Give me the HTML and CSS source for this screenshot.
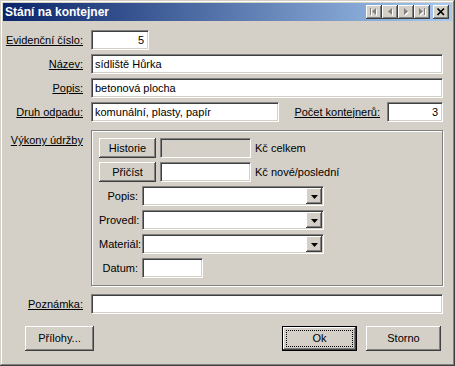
FILE: index.html
```html
<!DOCTYPE html>
<html lang="cs">
<head>
<meta charset="utf-8">
<title>Stání na kontejner</title>
<link rel="stylesheet" href="styles.css">
</head>
<body>
<div class="window">
  <div class="titlebar">
    <span class="title">Stání na kontejner</span>
    <div class="tb-buttons">
      <span class="tbtn"><svg width="16" height="14" viewBox="0 0 16 14"><g fill="#fff" transform="translate(1,1)"><rect x="4" y="3" width="1" height="7"/><polygon points="10,3 10,10 6,6.5"/></g><g fill="#808080"><rect x="4" y="3" width="1" height="7"/><polygon points="10,3 10,10 6,6.5"/></g></svg></span>
      <span class="tbtn"><svg width="16" height="14" viewBox="0 0 16 14"><g fill="#fff" transform="translate(1,1)"><polygon points="10,3 10,10 6,6.5"/></g><g fill="#808080"><polygon points="10,3 10,10 6,6.5"/></g></svg></span>
      <span class="tbtn"><svg width="16" height="14" viewBox="0 0 16 14"><g fill="#fff" transform="translate(1,1)"><polygon points="6,3 6,10 10,6.5"/></g><g fill="#808080"><polygon points="6,3 6,10 10,6.5"/></g></svg></span>
      <span class="tbtn"><svg width="16" height="14" viewBox="0 0 16 14"><g fill="#fff" transform="translate(1,1)"><polygon points="5,3 5,10 9,6.5"/><rect x="10" y="3" width="1" height="7"/></g><g fill="#808080"><polygon points="5,3 5,10 9,6.5"/><rect x="10" y="3" width="1" height="7"/></g></svg></span>
      <span class="tbtn close"><svg width="16" height="14" viewBox="0 0 16 14"><path d="M4.5 3.5 L11 10 M11 3.5 L4.5 10" stroke="#000" stroke-width="1.7" fill="none"/></svg></span>
    </div>
  </div>

  <div class="client">
    <div class="row">
      <span class="lbl">Evidenční číslo:</span>
      <div class="edit num w-evid">5</div>
    </div>
    <div class="row">
      <span class="lbl">Název:</span>
      <div class="edit w-full">sídliště Hůrka</div>
    </div>
    <div class="row">
      <span class="lbl">Popis:</span>
      <div class="edit w-full">betonová plocha</div>
    </div>
    <div class="row">
      <span class="lbl">Druh odpadu:</span>
      <div class="field-split">
        <div class="edit w-druh">komunální, plasty, papír</div>
        <span class="lbl-inline">Počet kontejnerů:</span>
        <div class="edit num w-pocet">3</div>
      </div>
    </div>

    <div class="row row-group">
      <span class="lbl lbl-top">Výkony údržby</span>
      <div class="group">
        <div class="grow">
          <span class="btn btn-small">Historie</span>
          <div class="edit gray w-kc"></div>
          <span class="note">Kč celkem</span>
        </div>
        <div class="grow">
          <span class="btn btn-small">Přičíst</span>
          <div class="edit w-kc"></div>
          <span class="note">Kč nové/poslední</span>
        </div>
        <div class="grow">
          <span class="glbl">Popis:</span>
          <div class="combo"><div class="combo-text"></div><span class="drop"><svg width="7" height="4" viewBox="0 0 7 4"><polygon points="0,0 7,0 3.5,4" fill="#000"/></svg></span></div>
        </div>
        <div class="grow">
          <span class="glbl">Provedl:</span>
          <div class="combo"><div class="combo-text"></div><span class="drop"><svg width="7" height="4" viewBox="0 0 7 4"><polygon points="0,0 7,0 3.5,4" fill="#000"/></svg></span></div>
        </div>
        <div class="grow">
          <span class="glbl">Materiál:</span>
          <div class="combo"><div class="combo-text"></div><span class="drop"><svg width="7" height="4" viewBox="0 0 7 4"><polygon points="0,0 7,0 3.5,4" fill="#000"/></svg></span></div>
        </div>
        <div class="grow">
          <span class="glbl">Datum:</span>
          <div class="edit w-datum"></div>
        </div>
      </div>
    </div>

    <div class="row row-note">
      <span class="lbl">Poznámka:</span>
      <div class="edit w-full"></div>
    </div>

    <div class="buttons">
      <span class="btn btn-prilohy">Přílohy...</span>
      <span class="spacer"></span>
      <span class="btn btn-ok default"><span class="focus">Ok</span></span>
      <span class="btn btn-storno">Storno</span>
    </div>
  </div>
</div>
</body>
</html>
```

FILE: styles.css
```css
* { box-sizing: border-box; }
html, body { margin: 0; padding: 0; }
body {
  width: 455px;
  height: 366px;
  overflow: hidden;
  background: #D4D0C8;
  font-family: "Liberation Sans", Arial, sans-serif;
  font-size: 11px;
  line-height: 13px;
  color: #000;
}
.window {
  width: 455px;
  height: 366px;
  padding: 3px;
  background: #D4D0C8;
  box-shadow: inset -1px -1px #404040, inset 1px 1px #D4D0C8, inset -2px -2px #808080, inset 2px 2px #ffffff;
  display: flex;
  flex-direction: column;
}
.titlebar {
  height: 18px;
  flex: none;
  background: linear-gradient(to right, #0A246A, #A6CAF0);
  display: flex;
  align-items: center;
  justify-content: space-between;
  padding: 0 3px 0 2px;
}
.title {
  color: #fff;
  font-weight: bold;
  font-size: 12px;
  line-height: 14px;
}
.tb-buttons { display: flex; align-items: center; }
.tbtn {
  width: 16px;
  height: 14px;
  display: flex;
  background: #D4D0C8;
  box-shadow: inset -1px -1px #404040, inset 1px 1px #ffffff, inset -2px -2px #808080;
}
.tbtn.close { margin-left: 3px; }
.tbtn svg { display: block; }

.client {
  flex: 1;
  display: flex;
  flex-direction: column;
  padding-top: 9px;
}
.row {
  display: flex;
  align-items: center;
  gap: 8px;
  height: 20px;
  margin-bottom: 4px;
}
.lbl {
  width: 80px;
  flex: none;
  text-align: right;
  text-decoration: underline;
  white-space: nowrap;
}
.row-group {
  height: 156px;
  align-items: flex-start;
  margin-top: 4px;
  margin-bottom: 0;
}
.lbl-top { padding-top: 4px; }
.row-note { margin-top: 8px; margin-bottom: 0; }

.edit {
  height: 20px;
  flex: none;
  background: #fff;
  border: 1px solid;
  border-color: #808080 #ffffff #ffffff #808080;
  box-shadow: inset 1px 1px #404040, inset -1px -1px #D4D0C8;
  padding: 0 2px 0 3px;
  line-height: 18px;
  white-space: nowrap;
  overflow: hidden;
}
.edit.num { text-align: right; padding-right: 4px; }
.edit.gray { background: #D4D0C8; }
.w-evid { width: 58px; }
.w-full { width: 352px; }
.w-druh { width: 188px; }
.w-pocet { width: 56px; }
.w-kc { width: 91px; }
.w-datum { width: 61px; }

.field-split {
  width: 352px;
  display: flex;
  align-items: center;
}
.lbl-inline {
  flex: 1;
  text-align: right;
  text-decoration: underline;
  padding-right: 7px;
  white-space: nowrap;
}

.group {
  width: 352px;
  height: 156px;
  border: 1px solid #808080;
  box-shadow: inset 1px 1px #ffffff, 1px 1px #ffffff;
  padding: 7px;
  display: flex;
  flex-direction: column;
  gap: 4px;
}
.grow {
  display: flex;
  align-items: center;
  height: 20px;
}
.note { margin-left: 4px; white-space: nowrap; }
.glbl {
  width: 39px;
  text-align: right;
  margin-right: 4px;
  white-space: nowrap;
}
.combo {
  width: 182px;
  height: 20px;
  display: flex;
  border: 1px solid;
  border-color: #808080 #ffffff #ffffff #808080;
  box-shadow: inset 1px 1px #404040, inset -1px -1px #D4D0C8;
  padding: 1px;
  background: #D4D0C8;
}
.combo-text { flex: 1; background: #fff; }
.drop {
  width: 16px;
  height: 16px;
  display: flex;
  align-items: center;
  justify-content: center;
  background: #D4D0C8;
  box-shadow: inset -1px -1px #404040, inset 1px 1px #ffffff, inset -2px -2px #808080;
  padding-top: 1px;
}
.drop svg { display: block; }

.btn {
  display: flex;
  align-items: center;
  justify-content: center;
  background: #D4D0C8;
  box-shadow: inset -1px -1px #404040, inset 1px 1px #ffffff, inset -2px -2px #808080;
  white-space: nowrap;
  flex: none;
}
.btn-small { width: 57px; height: 20px; margin-right: 4px; }
.buttons {
  display: flex;
  margin-top: 12px;
  padding: 0 11px 0 22px;
}
.spacer { flex: 1; }
.btn-prilohy { width: 69px; height: 25px; }
.btn-ok { width: 75px; height: 25px; }
.btn-storno { width: 75px; height: 25px; margin-left: 9px; }
.btn.default {
  border: 1px solid #000;
  padding: 3px;
}
.focus {
  width: 100%;
  height: 100%;
  border: 1px dotted #000;
  display: flex;
  align-items: center;
  justify-content: center;
}
```
